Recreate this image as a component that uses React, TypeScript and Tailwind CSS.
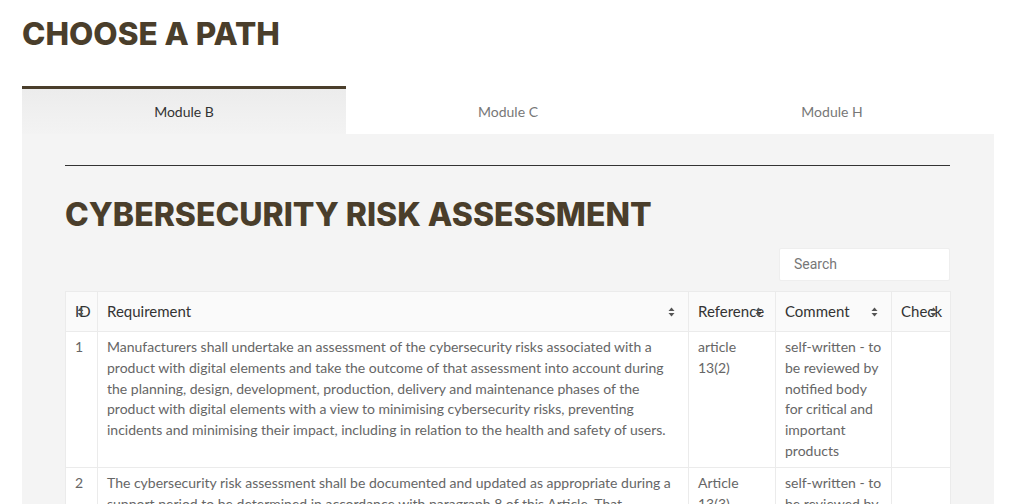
import React from "react";

function SortIcon() {
  return (
    <svg width="7" height="10" viewBox="0 0 7 10" className="absolute right-[13px] top-1/2 -translate-y-1/2">
      <path d="M3.5 0.5 L6.5 4 L0.5 4 Z" fill="#555" />
      <path d="M0.5 6 L6.5 6 L3.5 9.5 Z" fill="#555" />
    </svg>
  );
}

const rows = [
  {
    id: "1",
    req: "Manufacturers shall undertake an assessment of the cybersecurity risks associated with a product with digital elements and take the outcome of that assessment into account during the planning, design, development, production, delivery and maintenance phases of the product with digital elements with a view to minimising cybersecurity risks, preventing incidents and minimising their impact, including in relation to the health and safety of users.",
    ref: "article 13(2)",
    comment: "self-written - to be reviewed by notified body for critical and important products",
  },
  {
    id: "2",
    req: "The cybersecurity risk assessment shall be documented and updated as appropriate during a support period to be determined in accordance with paragraph 8 of this Article. That cybersecurity risk assessment shall comprise at least an analysis of cybersecurity risks based on the intended purpose and reasonably foreseeable use.",
    ref: "Article 13(3)",
    comment: "self-written - to be reviewed by notified body for critical and important products",
  },
];

export default function App() {
  const body = { fontFamily: "Lato, 'Open Sans', sans-serif" };
  const head = { fontFamily: "Inter, 'Noto Sans', sans-serif" };
  return (
    <div className="w-[1024px] min-h-[504px] bg-white" style={body}>
      <div className="px-[22px] pt-[14px]">
        <h1 className="text-[31.5px] leading-[40px] font-extrabold text-[#4a3e2b]" style={head}>
          CHOOSE A PATH
        </h1>
        <div className="mt-[32px] grid grid-cols-3 w-[972px]">
          <div className="h-[48px] border-t-[3px] border-[#4a3e2b] bg-gradient-to-b from-[#ececec] to-[#f3f3f3] flex items-center justify-center text-[14px] text-[#333]">
            Module B
          </div>
          <div className="h-[48px] pt-[3px] bg-white flex items-center justify-center text-[14px] text-[#777]">
            Module C
          </div>
          <div className="h-[48px] pt-[3px] bg-white flex items-center justify-center text-[14px] text-[#777]">
            Module H
          </div>
        </div>
        <div className="w-[972px] bg-[#f4f4f4] pl-[43px] pr-[44px] pt-[31px] pb-[40px]">
          <div className="h-px bg-[#333]" />
          <h2 className="mt-[29px] text-[32px] leading-[40px] font-extrabold text-[#4a3e2b]" style={head}>
            CYBERSECURITY RISK ASSESSMENT
          </h2>
          <div className="mt-[13px] flex justify-end">
            <div className="w-[171px] h-[33px] bg-white border border-[#eee] rounded-[2px] flex items-center pl-[14px] text-[14px] text-[#777]" style={{ fontFamily: "Roboto, sans-serif" }}>
              Search
            </div>
          </div>
          <table className="mt-[10px] w-[885px] table-fixed border-collapse border border-[#ebebeb] text-[14px]">
            <colgroup>
              <col className="w-[32px]" />
              <col className="w-[591px]" />
              <col className="w-[87px]" />
              <col className="w-[116px]" />
              <col className="w-[59px]" />
            </colgroup>
            <thead>
              <tr className="h-[40px] bg-[#fafafa] text-[15px] text-[#333]">
                {["ID", "Requirement", "Reference", "Comment", "Check"].map((h) => (
                  <th key={h} className="relative border border-[#ebebeb] text-left font-normal px-[9px] whitespace-nowrap overflow-visible">
                    {h}
                    <SortIcon />
                  </th>
                ))}
              </tr>
            </thead>
            <tbody className="bg-white text-[#666] leading-[20.8px]">
              {rows.map((r) => (
                <tr key={r.id}>
                  <td className="border border-[#ebebeb] align-top px-[9px] pt-[5px] pb-[5px]">{r.id}</td>
                  <td className="border border-[#ebebeb] align-top px-[9px] pt-[5px] pb-[5px]">{r.req}</td>
                  <td className="border border-[#ebebeb] align-top px-[9px] pt-[5px] pb-[5px]">{r.ref}</td>
                  <td className="border border-[#ebebeb] align-top px-[9px] pt-[5px] pb-[5px]">{r.comment}</td>
                  <td className="border border-[#ebebeb] align-top px-[9px] pt-[5px] pb-[5px]"></td>
                </tr>
              ))}
            </tbody>
          </table>
        </div>
      </div>
    </div>
  );
}
